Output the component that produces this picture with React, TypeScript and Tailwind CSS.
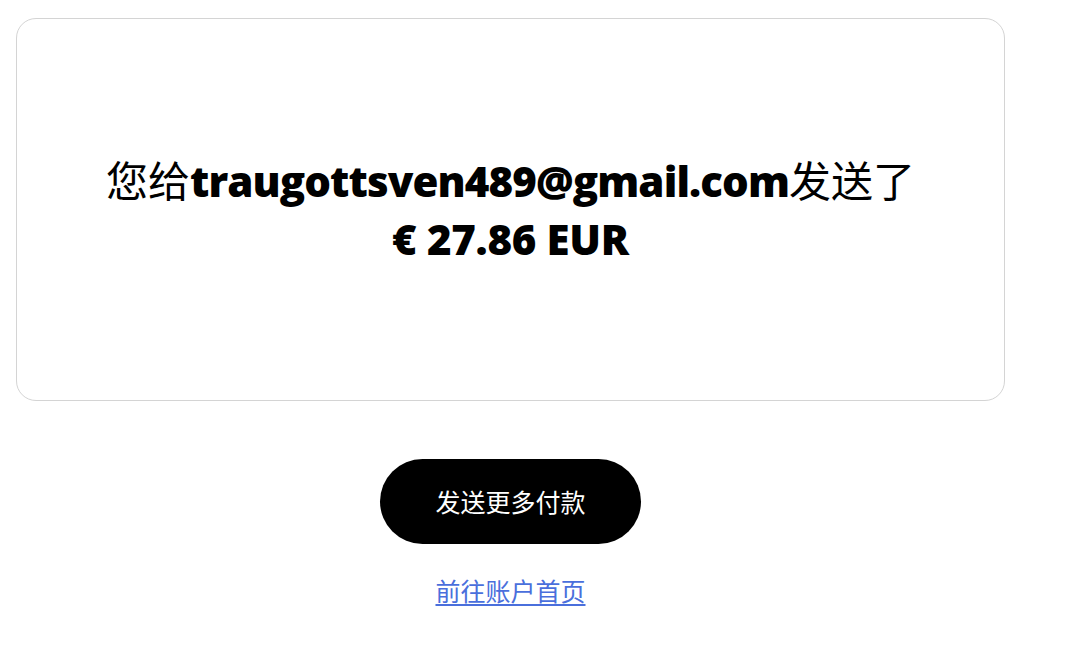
import React from 'react';

export default function App() {
  const cjk = '"Noto Sans CJK SC", sans-serif';
  return (
    <div className="min-h-[646px] bg-white" style={{ fontFamily: cjk }}>
      <div className="pt-[18px] pl-4">
        <div className="w-[989px] h-[383px] rounded-[20px] border border-[#d4d4d4] flex items-center justify-center">
          <p className="text-center text-[42px] leading-[56px] text-black -mt-[2px]">
            您给
            <span className="font-extrabold tracking-[-0.9px] font-['Open_Sans','Noto_Sans_CJK_SC',sans-serif]">traugottsven489@gmail.com</span>
            发送了
            <br />
            <span className="font-extrabold tracking-[-0.3px] font-['Open_Sans','Noto_Sans_CJK_SC',sans-serif]">€ 27.86 EUR</span>
          </p>
        </div>
      </div>
      <div className="w-[989px] ml-4 flex flex-col items-center pt-[58px]">
        <button className="w-[261px] h-[85px] rounded-full bg-black text-white text-[25px]">
          发送更多付款
        </button>
        <a href="#" className="mt-[28px] text-[25px] leading-[36px] text-[#4a6fdc] underline underline-offset-[3px]">
          前往账户首页
        </a>
      </div>
    </div>
  );
}
